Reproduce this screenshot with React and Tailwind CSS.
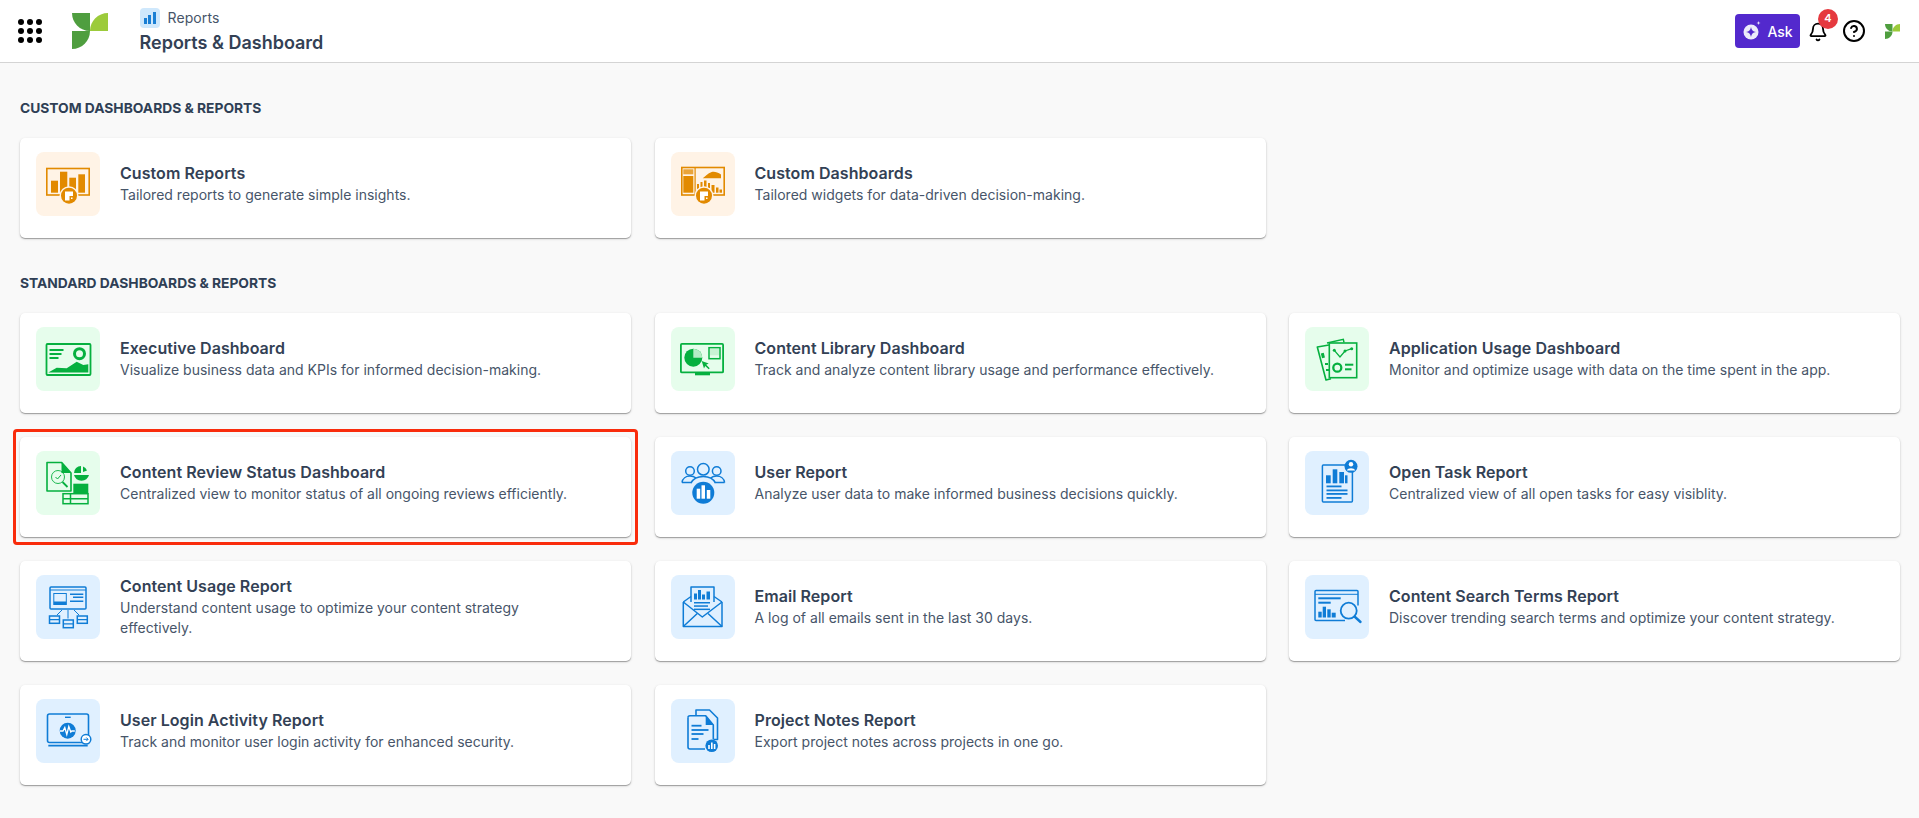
import React from 'react'
import { Bell, CircleHelp } from 'lucide-react'

const orange = '#e28a00'
const green = '#06b03f'
const blue = '#0f7cd6'

const Logo = ({ className }) => (
  <svg viewBox="0 0 36 36" className={className}>
    <path d="M0 0h18v18C8 18 0 10 0 0z" fill="#4f9e3f" />
    <path d="M18 18C18 8 26 0 36 0v18z" fill="#9ccb3b" />
    <path d="M0 18h18c0 10-8 18-18 18z" fill="#4f9e3f" />
  </svg>
)

// small round badge on the two custom report icons
const DocBadge = () => (
  <g>
    <circle cx="33" cy="43.700" r="9.500" fill="#fff3e6" />
    <circle cx="33" cy="43.700" r="8" fill={orange} />
    <path d="M29 39.500h8v4.500h-3.500v4.500H29z" fill="#fff" />
    <path d="M35 45.500h1.500V47H35z" fill="#fff" />
  </g>
)

const CustomReportsIcon = () => (
  <svg viewBox="0 0 64 64" className="w-16 h-16">
    <rect x="10.800" y="16.500" width="42.400" height="26.500" fill="none" stroke={orange} strokeWidth="1.600" />
    <g fill={orange}>
      <rect x="15" y="28.700" width="7" height="12" />
      <rect x="24" y="19.700" width="7.300" height="21" />
      <rect x="33.300" y="25.700" width="6.700" height="15" />
      <rect x="42.300" y="22.300" width="6.700" height="18.400" />
    </g>
    <DocBadge />
  </svg>
)

const CustomDashIcon = () => (
  <svg viewBox="0 0 64 64" className="w-16 h-16">
    <rect x="10.800" y="15.500" width="42.400" height="27.500" fill="none" stroke={orange} strokeWidth="1.600" />
    <g fill={orange}>
      <rect x="12.300" y="17.300" width="10" height="5" opacity="0.75" />
      <rect x="12.300" y="24" width="10" height="16.700" />
      <rect x="23.500" y="16" width="1.200" height="27" />
      <path d="M31.700 26.300c2.500-2 5-5 9-6.300 3-.6 6 .3 9.300 2.500v3.800z" />
      <rect x="26" y="32" width="2" height="5" />
      <rect x="29.500" y="30" width="2" height="6" />
      <rect x="33" y="28.500" width="2.500" height="7" />
      <rect x="37" y="31" width="2" height="5" />
      <rect x="40.500" y="33" width="3" height="7.700" />
      <rect x="45" y="35.500" width="2.500" height="5.200" />
      <rect x="48.500" y="37.500" width="2.500" height="3.200" />
    </g>
    <DocBadge />
  </svg>
)

const ExecutiveIcon = () => (
  <svg viewBox="0 0 64 64" className="w-16 h-16">
    <rect x="10.500" y="17" width="44" height="31" rx="1" fill="none" stroke={green} strokeWidth="1.800" />
    <g fill={green}>
      <rect x="13.500" y="22" width="14" height="2" />
      <rect x="13.500" y="26" width="12" height="2" />
      <rect x="13.500" y="30" width="9" height="2" />
      <path d="M12.300 45.500l8.400-4.800 10 .6 10-6.600 6.600 3.300 5-.7v8.200z" />
    </g>
    <circle cx="43.500" cy="26.700" r="5" fill="none" stroke={green} strokeWidth="3" />
  </svg>
)

const ReviewIcon = () => (
  <svg viewBox="0 0 64 64" className="w-16 h-16">
    <path d="M11 11.500h14.700L35 22v18H11z" fill="none" stroke={green} strokeWidth="1.600" strokeLinejoin="round" />
    <path d="M25.500 11.500L35 22h-9.500z" fill={green} />
    <circle cx="22" cy="26" r="6.500" fill="none" stroke={green} strokeWidth="0.900" />
    <path d="M19.500 26l2 2 3.500-4" fill="none" stroke={green} strokeWidth="1" />
    <path d="M26.500 31l5 5" stroke={green} strokeWidth="1.800" />
    <path d="M45 15a7 7 0 0 0-7 7h7z" fill={green} />
    <path d="M47 15.500a7 7 0 0 1 4 4l-4 1.500z" fill={green} />
    <path d="M38 24h15a7.800 7.800 0 0 1-15 0z" fill={green} />
    <rect x="37.300" y="32.700" width="15" height="10" fill={green} />
    <rect x="27" y="42.700" width="25" height="10" fill="none" stroke={green} strokeWidth="1.500" />
    <path d="M27 47.700h25M34.500 42.700v10" stroke={green} strokeWidth="1.500" />
  </svg>
)

const LibraryIcon = () => (
  <svg viewBox="0 0 64 64" className="w-16 h-16">
    <rect x="9.900" y="16.900" width="42.200" height="28.500" rx="1" fill="none" stroke={green} strokeWidth="1.800" />
    <rect x="24" y="45.700" width="15" height="2.600" fill={green} />
    <circle cx="22.300" cy="30.700" r="9" fill={green} />
    <path d="M22.300 21.700a9 9 0 0 1 9 9h-9z" fill="#b4ecc4" />
    <rect x="38" y="20.700" width="11" height="11" fill="none" stroke={green} strokeWidth="1.500" />
    <rect x="39" y="21.800" width="9" height="6.500" fill="#c9f2d4" />
    <path d="M30.700 34l7 2.500-2.500 1.300 3.500 3.500-1 1-3.500-3.300-1.200 2.500z" fill={green} />
  </svg>
)

const UsageIcon = () => (
  <svg viewBox="0 0 64 64" className="w-16 h-16">
    <g fill="none" stroke={blue}>
      <rect x="14" y="12" width="36" height="22" rx="1" strokeWidth="1.500" />
      <path d="M14 15h36" strokeWidth="1" />
      <rect x="17.800" y="18.500" width="12.500" height="11" strokeWidth="1" />
      <path d="M34 19.300h13.300M37 22.300h10.300M34 26.300h13.300" strokeWidth="1.500" />
      <path d="M26 35l-5 5M32 35v8.500M38 35l5 5" strokeWidth="1" />
      <rect x="13.500" y="41" width="10" height="7.300" strokeWidth="1.500" />
      <rect x="27.300" y="45" width="10" height="7.700" strokeWidth="1.500" />
      <rect x="41.300" y="41" width="10" height="7.300" strokeWidth="1.500" />
      <path d="M13.500 44.600h10M27.300 48.800h10M41.300 44.600h10" strokeWidth="1.300" />
    </g>
    <rect x="17.800" y="26.500" width="12.500" height="3" fill={blue} />
  </svg>
)

const LoginIcon = () => (
  <svg viewBox="0 0 64 64" className="w-16 h-16">
    <rect x="11.500" y="15" width="41" height="28.500" rx="2" fill="none" stroke={blue} strokeWidth="1.600" />
    <path d="M12.300 46.700h39.400" stroke={blue} strokeWidth="1.800" />
    <rect x="29" y="17.600" width="5.700" height="1.400" fill={blue} />
    <circle cx="31.700" cy="31.700" r="8" fill={blue} />
    <path d="M24 32h3l1.800-3.500 2 7 2-8 2 5.500 1-1h3" fill="none" stroke="#fff" strokeWidth="1.300" />
    <circle cx="50" cy="40.300" r="4.800" fill="#fff" stroke={blue} strokeWidth="1.500" />
    <path d="M47.500 40.300h4.500m-1.700-1.800 1.800 1.800-1.800 1.800" fill="none" stroke={blue} strokeWidth="1" />
  </svg>
)

const UserIcon = () => (
  <svg viewBox="0 0 64 64" className="w-16 h-16">
    <g fill="none" stroke={blue} strokeWidth="1.500">
      <circle cx="19" cy="20" r="4.300" />
      <circle cx="32.300" cy="18.300" r="5.800" />
      <circle cx="45.700" cy="20" r="4.300" />
      <path d="M11 31.500c.5-4 4-6.500 8-6.500 2.500 0 4.500.8 6 2M53.600 31.500c-.5-4-4-6.500-8-6.500-2.500 0-4.500.8-6 2M11 31.500h10M53.600 31.500h-10" />
      <path d="M20 32c2-4 7-6.500 12.300-6.500S42.500 28 44.500 32" />
    </g>
    <circle cx="32.300" cy="41.700" r="11" fill={blue} />
    <rect x="25.700" y="37.700" width="3.500" height="10" fill="#fff" />
    <rect x="30.500" y="34.300" width="3.500" height="13.400" fill="#fff" />
    <rect x="35.800" y="39" width="3.500" height="8.700" fill="#fff" />
  </svg>
)

const EmailIcon = () => (
  <svg viewBox="0 0 64 64" className="w-16 h-16">
    <g fill="none" stroke={blue} strokeWidth="1.500" strokeLinejoin="round">
      <path d="M20 27V12h23v15" />
      <path d="M12.300 27v24.500h38.700V27" />
      <path d="M12.300 27l19 15 19.700-15" />
      <path d="M12.300 51.500l14-13M51 51.500l-14-13" />
      <path d="M20 21.500l-7.700 5.500M43 21.500l8 5.500" />
    </g>
    <g fill={blue}>
      <rect x="23" y="18.500" width="3" height="6" />
      <rect x="27" y="15" width="3" height="9.500" />
      <rect x="31" y="19.500" width="3" height="5" />
      <rect x="35.500" y="16.500" width="3.500" height="8" />
      <rect x="23" y="27" width="16" height="1.500" />
      <rect x="23" y="30.300" width="14" height="1.500" />
      <rect x="23" y="33.600" width="16" height="1.500" />
    </g>
  </svg>
)

const NotesIcon = () => (
  <svg viewBox="0 0 64 64" className="w-16 h-16">
    <g fill="none" stroke={blue} strokeWidth="1.600" strokeLinejoin="round">
      <path d="M25 16v-5h13.500l8 8v21.500h-4" />
      <path d="M17 18.700a2 2 0 0 1 2-2h15.700l7.600 9.300v14.500" fill="#e0f0ff" />
      <path d="M17 18.700V48a2 2 0 0 0 2 2h15" />
    </g>
    <path d="M34.700 16.700l7.600 9.300h-7.600z" fill={blue} />
    <g fill={blue}>
      <rect x="20.500" y="25.800" width="10" height="1.800" />
      <rect x="20.500" y="30.100" width="17" height="1.800" />
      <rect x="20.500" y="34.100" width="12" height="1.800" />
      <rect x="20.500" y="39.100" width="7" height="1.800" />
      <circle cx="40.700" cy="46.700" r="6.300" />
    </g>
    <rect x="37.200" y="46" width="1.600" height="4" fill="#fff" />
    <rect x="40" y="43.500" width="1.600" height="6.500" fill="#fff" />
    <rect x="42.800" y="45" width="1.600" height="5" fill="#fff" />
  </svg>
)

const AppUsageIcon = () => (
  <svg viewBox="0 0 64 64" className="w-16 h-16">
    <path d="M24 18l-11.700 2 8.700 33 5-1.300" fill="none" stroke={green} strokeWidth="1.600" strokeLinejoin="round" />
    <path d="M22 16l16.300-3.700.7 3" fill="none" stroke={green} strokeWidth="1.500" />
    <rect x="24.300" y="16" width="27.400" height="34.700" fill="#e6fdec" stroke={green} strokeWidth="1.600" />
    <path d="M29.300 23.300L35 30l5-6 6.700-2.300" fill="none" stroke={green} strokeWidth="1.300" />
    <g fill={green}>
      <circle cx="29.300" cy="23.300" r="1.500" />
      <circle cx="40" cy="24" r="1.500" />
      <circle cx="46.700" cy="21.700" r="1.500" />
      <rect x="40" y="36.700" width="8.300" height="2" />
      <rect x="40" y="41.300" width="6.500" height="2" />
      <rect x="16.500" y="26" width="3" height="5" transform="rotate(-14 18 29)" />
      <rect x="20" y="36" width="3" height="2" />
      <rect x="21" y="42" width="3" height="2" />
    </g>
    <circle cx="32.300" cy="40.700" r="4" fill="none" stroke={green} strokeWidth="2.300" />
  </svg>
)

const TaskIcon = () => (
  <svg viewBox="0 0 64 64" className="w-16 h-16">
    <rect x="17.400" y="14" width="30" height="37" rx="1" fill="none" stroke={blue} strokeWidth="1.500" />
    <g fill={blue}>
      <rect x="21" y="24.300" width="4.700" height="8" />
      <rect x="27.700" y="18.300" width="4.600" height="14" />
      <rect x="34.300" y="21" width="4.700" height="11.300" />
      <rect x="40" y="24.300" width="2.500" height="8" />
      <rect x="21.500" y="34.500" width="15" height="1.800" />
      <rect x="21.500" y="38.500" width="21" height="1.800" />
      <rect x="21.500" y="42" width="21" height="1.800" />
      <rect x="21.500" y="46" width="15" height="1.800" />
      <circle cx="46" cy="15.300" r="6.500" />
    </g>
    <circle cx="46" cy="13.300" r="2.200" fill="#fff" />
    <path d="M41.800 19.500c1-3 7.400-3 8.400 0z" fill="#fff" />
  </svg>
)

const SearchIcon = () => (
  <svg viewBox="0 0 64 64" className="w-16 h-16">
    <path d="M40 45.500H11a1 1 0 0 1-1-1V16.500a1 1 0 0 1 1-1h41a1 1 0 0 1 1 1v14" fill="none" stroke={blue} strokeWidth="1.500" />
    <path d="M10 19.300h43" stroke={blue} strokeWidth="1" />
    <g fill={blue}>
      <rect x="13.300" y="22.300" width="22.400" height="2" />
      <rect x="13.300" y="26.700" width="12.400" height="2" />
      <rect x="13.300" y="36.700" width="3.400" height="5.800" />
      <rect x="17.700" y="31.700" width="3.300" height="10.800" />
      <rect x="22.300" y="34.300" width="3.400" height="8.200" />
      <rect x="26.700" y="37.700" width="4" height="4.800" />
    </g>
    <circle cx="43.700" cy="35.700" r="8" fill="#e0f0ff" stroke={blue} strokeWidth="1.800" />
    <path d="M49.500 41.500l6 5.500" stroke={blue} strokeWidth="2.400" strokeLinecap="round" />
  </svg>
)

const tints = {
  orange: 'bg-[#fff3e6]',
  green: 'bg-[#e6fdec]',
  blue: 'bg-[#e0f0ff]',
}

const customCards = [
  { title: 'Custom Reports', desc: 'Tailored reports to generate simple insights.', tint: 'orange', Icon: CustomReportsIcon },
  { title: 'Custom Dashboards', desc: 'Tailored widgets for data-driven decision-making.', tint: 'orange', Icon: CustomDashIcon },
]

const standardCards = [
  { title: 'Executive Dashboard', desc: 'Visualize business data and KPIs for informed decision-making.', tint: 'green', Icon: ExecutiveIcon },
  { title: 'Content Library Dashboard', desc: 'Track and analyze content library usage and performance effectively.', tint: 'green', Icon: LibraryIcon },
  { title: 'Application Usage Dashboard', desc: 'Monitor and optimize usage with data on the time spent in the app.', tint: 'green', Icon: AppUsageIcon },
  { title: 'Content Review Status Dashboard', desc: 'Centralized view to monitor status of all ongoing reviews efficiently.', tint: 'green', Icon: ReviewIcon, marked: true },
  { title: 'User Report', desc: 'Analyze user data to make informed business decisions quickly.', tint: 'blue', Icon: UserIcon },
  { title: 'Open Task Report', desc: 'Centralized view of all open tasks for easy visiblity.', tint: 'blue', Icon: TaskIcon },
  { title: 'Content Usage Report', desc: 'Understand content usage to optimize your content strategy effectively.', tint: 'blue', Icon: UsageIcon },
  { title: 'Email Report', desc: 'A log of all emails sent in the last 30 days.', tint: 'blue', Icon: EmailIcon },
  { title: 'Content Search Terms Report', desc: 'Discover trending search terms and optimize your content strategy.', tint: 'blue', Icon: SearchIcon },
  { title: 'User Login Activity Report', desc: 'Track and monitor user login activity for enhanced security.', tint: 'blue', Icon: LoginIcon },
  { title: 'Project Notes Report', desc: 'Export project notes across projects in one go.', tint: 'blue', Icon: NotesIcon },
]

const Card = ({ title, desc, tint, Icon, marked }) => (
  <div className="relative h-[100px] bg-white rounded-[5px] pl-4 pr-3 pt-[14px] flex items-start gap-5 shadow-[0_1px_1px_rgba(0,0,0,0.3),0_1px_3px_rgba(0,0,0,0.14)]">
    <div className={`w-16 h-16 shrink-0 rounded-lg ${tints[tint]}`}>
      <Icon />
    </div>
    <div className="h-16 pb-[2px] flex flex-col justify-center max-w-[465px]">
      <div className="text-[16px] leading-[22px] mb-[1px] font-semibold tracking-[0.06px] text-[#334155]">{title}</div>
      <div className="text-[14px] leading-[20px] tracking-[0.01px] text-[#475569]">{desc}</div>
    </div>
    {marked && (
      <div className="absolute -left-[7px] -right-[7px] -top-[8px] -bottom-[8px] border-[3px] border-[#f92c0c] rounded-[4px]" />
    )}
  </div>
)

const Section = ({ label, cards }) => (
  <div>
    <h2 className="text-[13.8px] leading-5 font-bold text-[#2f3f55] uppercase">{label}</h2>
    <div className="grid grid-cols-3 gap-x-[23.5px] gap-y-6 mt-5">
      {cards.map((c) => (
        <Card key={c.title} {...c} />
      ))}
    </div>
  </div>
)

export default function App() {
  return (
    <div className="min-h-[818px] bg-[#f9f9f9] font-['Inter',sans-serif]">
      <header className="h-[63px] bg-white border-b border-[#d4d4d4] flex items-center">
        <div className="grid grid-cols-3 gap-x-[3.5px] gap-y-[3.5px] ml-[18px]">
          {[...Array(9)].map((_, i) => (
            <span key={i} className="w-[5.5px] h-[5.5px] rounded-full bg-black" />
          ))}
        </div>
        <Logo className="w-9 h-9 ml-[30px]" />
        <div className="ml-8">
          <div className="flex items-center gap-2 h-5">
            <div className="w-5 h-5 rounded bg-[#cfe8fc] flex items-end justify-center gap-[1.500px] pb-1">
              <span className="w-[3px] h-[6px] bg-[#1a7fd4]" />
              <span className="w-[3px] h-[9px] bg-[#1a7fd4]" />
              <span className="w-[3px] h-3 bg-[#1a7fd4]" />
            </div>
            <span className="text-[14px] tracking-[0.1px] text-[#475569]">Reports</span>
          </div>
          <div className="text-[18px] leading-6 font-semibold text-[#334155] mt-[3px]">Reports &amp; Dashboard</div>
        </div>
        <div className="ml-auto flex items-center">
          <button className="relative w-[65px] h-[34px] bg-[#5329cd] rounded-[4px] flex items-center justify-center gap-[5px] text-white text-[14px] font-medium">
            <svg viewBox="0 0 20 20" className="w-[20px] h-[20px]">
              <circle cx="9" cy="11" r="7.500" fill="#ecebfa" />
              <path d="M9 6c.6 3.200 1.800 4.400 5 5-3.200.6-4.400 1.800-5 5-.6-3.200-1.800-4.400-5-5 3.200-.6 4.400-1.800 5-5z" fill="#5329cd" />
              <path d="M16.500 0l.5 1.500 1.500.5-1.500.5-.5 1.500-.5-1.500L14.500 2 16 1.500z" fill="#ecebfa" />
            </svg>
            Ask
          </button>
          <div className="relative ml-[8px] mt-[1px]">
            <Bell size={20} strokeWidth={2.200} color="#000" />
            <span className="absolute -top-[13px] left-[10px] w-5 h-5 rounded-full bg-[#e5393f] text-white text-[11px] font-semibold flex items-center justify-center">4</span>
          </div>
          <CircleHelp size={24} strokeWidth={2} color="#000" className="ml-[14px]" />
          <Logo className="w-[15px] h-[15px] ml-[19px] mr-[19px]" />
        </div>
      </header>
      <main className="pl-5 pr-[19px] pt-[35px] flex flex-col gap-[35px]">
        <Section label="Custom Dashboards & Reports" cards={customCards} />
        <Section label="Standard Dashboards & Reports" cards={standardCards} />
      </main>
    </div>
  )
}
